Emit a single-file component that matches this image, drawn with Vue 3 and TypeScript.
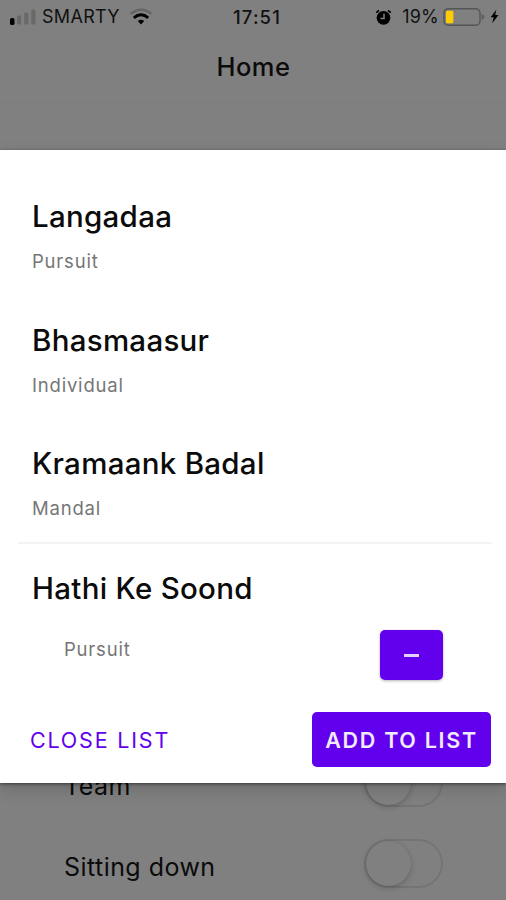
<script setup lang="ts">
interface Game {
  name: string
  kind: string
}

const games: Game[] = [
  { name: 'Langadaa', kind: 'Pursuit' },
  { name: 'Bhasmaasur', kind: 'Individual' },
  { name: 'Kramaank Badal', kind: 'Mandal' },
]

const filters: string[] = ['Team', 'Sitting down']
</script>

<template>
  <div class="screen">
    <header class="status">
      <div class="carrier">
        <svg class="signal" width="28" height="18" viewBox="0 0 28 18">
          <rect x="1" y="10" width="4.5" height="7" rx="1.6" fill="#000" />
          <g fill="#696969">
            <rect x="8" y="7.5" width="4.2" height="9" rx="1.2" />
            <rect x="15.2" y="4.5" width="4.2" height="12" rx="1.2" />
            <rect x="22.3" y="1.5" width="4.2" height="15" rx="1.2" />
          </g>
        </svg>
        <span class="carrier-name">SMARTY</span>
        <svg class="wifi" width="24" height="18" viewBox="0 0 24 18">
          <path d="M1.6 5.8Q12-2.4 22.4 5.8" fill="none" stroke="#656565" stroke-width="2.5" />
          <path d="M4.8 9.8Q12 3.8 19.2 9.8" fill="none" stroke="#000" stroke-width="2.9" />
          <path d="M12 16.4L8.8 13.1Q12 10.4 15.2 13.1Z" fill="#000" />
        </svg>
      </div>
      <span class="clock">17:51</span>
      <div class="power">
        <svg class="alarm" width="17" height="17" viewBox="0 0 17 17">
          <circle cx="8.5" cy="8.8" r="6.9" fill="#000" />
          <path d="M1.2 3.6L4 1.5M15.8 3.6L13 1.5" stroke="#000" stroke-width="1.8" />
          <path d="M9 4.8V9.4H5.4" fill="none" stroke="#808080" stroke-width="1.5" />
        </svg>
        <span class="percent">19%</span>
        <svg class="battery" width="42" height="20" viewBox="0 0 42 20">
          <rect x="1" y="1.7" width="36" height="16.6" rx="4.2" fill="none" stroke="#555" stroke-width="1.4" />
          <rect x="3" y="3.8" width="7.4" height="12.4" rx="1.4" fill="#ffcc00" />
          <path d="M38.5 6.8Q41.5 8 41.5 10T38.5 13.2Z" fill="#606060" />
        </svg>
        <svg class="bolt" width="9" height="15" viewBox="0 0 9 15">
          <path d="M6.3 .8L.6 8.2H3.7L2.2 14.2L8.5 6.1H5.2Z" fill="#000" />
        </svg>
      </div>
    </header>
    <h1 class="title">Home</h1>
    <section class="filters">
      <div v-for="label in filters" :key="label" class="filter">
        <span class="filter-label">{{ label }}</span>
        <span class="switch"><span class="knob"></span></span>
      </div>
    </section>

    <main class="dialog">
      <article v-for="game in games" :key="game.name" class="game">
        <h2 class="name">{{ game.name }}</h2>
        <p class="kind">{{ game.kind }}</p>
      </article>
      <article class="game selected">
        <h2 class="name">Hathi Ke Soond</h2>
        <div class="choice">
          <p class="kind">Pursuit</p>
          <button class="remove" aria-label="Remove"><span class="minus"></span></button>
        </div>
      </article>
      <footer class="actions">
        <button class="close">CLOSE LIST</button>
        <button class="add">ADD TO LIST</button>
      </footer>
    </main>
  </div>
</template>

<style>
body {
  background: #808080;
}
</style>

<style scoped>
.screen {
  position: relative;
  display: flex;
  flex-direction: column;
  width: 506px;
  height: 900px;
  overflow: hidden;
  background: #808080;
  color: #0b0b0b;
  font-family: Inter, "Liberation Sans", sans-serif;
}
h1, h2, p {
  margin: 0;
  font-weight: 400;
}
button {
  border: 0;
  padding: 0;
  font-family: inherit;
}
svg {
  display: block;
  flex: none;
}
.status {
  display: grid;
  grid-template-columns: 1fr auto 1fr;
  align-items: center;
  height: 34px;
  padding: 0 7px 0 9px;
  box-sizing: border-box;
  font-size: 18px;
  line-height: 34px;
  color: #111;
}
.carrier, .power {
  display: flex;
  align-items: center;
}
.power {
  justify-content: flex-end;
}
.carrier-name {
  width: 78px;
  margin-left: 5px;
  letter-spacing: 0.3px;
}
.wifi {
  margin-left: 9px;
}
.clock {
  margin-left: 6px;
  font-size: 18.5px;
  font-weight: 500;
  line-height: 33px;
  letter-spacing: 1.1px;
}
.percent {
  margin: 0 4px 0 10px;
  letter-spacing: 0.2px;
}
.bolt {
  margin: 0 0 2px 5px;
}
.title {
  height: 68px;
  padding-left: 1px;
  border-bottom: 1px solid #7d7d7d;
  line-height: 66px;
  text-align: center;
  font-size: 25.5px;
  font-weight: 550;
  letter-spacing: 0.5px;
}
.filters {
  margin-top: auto;
  padding: 0 63px 0 64px;
}
.filter {
  display: flex;
  align-items: center;
  justify-content: space-between;
  height: 78px;
}
.filters .filter:last-child {
  height: 74px;
  margin-top: 5px;
}
.filter-label {
  padding-top: 7px;
  font-size: 25px;
  letter-spacing: 0.45px;
}
.switch {
  box-sizing: border-box;
  width: 79px;
  height: 49px;
  border: 2px solid #747474;
  border-radius: 25px;
}
.knob {
  display: block;
  width: 45px;
  height: 45px;
  border-radius: 50%;
  background: #808080;
  box-shadow: 0 2px 6px rgba(0, 0, 0, 0.2), 0 0 1px rgba(0, 0, 0, 0.15);
}
.dialog {
  position: absolute;
  top: 150px;
  left: 0;
  box-sizing: border-box;
  width: 506px;
  height: 633px;
  padding-top: 22px;
  background: #fff;
  box-shadow: 0 1px 3px rgba(0, 0, 0, 0.5), 0 6px 16px rgba(0, 0, 0, 0.16);
}
.game {
  box-sizing: border-box;
  height: 123.7px;
  padding: 24px 15px 0 32px;
}
.name {
  font-size: 29.5px;
  font-weight: 450;
  line-height: 40px;
  letter-spacing: 0.28px;
}
.kind {
  margin-top: 13px;
  font-size: 18.5px;
  line-height: 24px;
  letter-spacing: 0.8px;
  color: #767676;
}
.selected {
  height: 154px;
  margin: -1px 14px 0 18px;
  border-top: 2px solid #f3f3f3;
  padding: 24px 49px 0 14px;
}
.choice {
  display: flex;
  align-items: flex-start;
  justify-content: space-between;
  padding: 22px 0 0 32px;
}
.choice .kind {
  margin-top: 7px;
}
.remove {
  display: flex;
  align-items: center;
  justify-content: center;
  width: 63px;
  height: 50px;
  border-radius: 5px;
  background: #6200ee;
  box-shadow: 0 1px 3px rgba(0, 0, 0, 0.3);
}
.minus {
  width: 15px;
  height: 3px;
  background: #e3d2fc;
}
.actions {
  display: flex;
  align-items: center;
  justify-content: space-between;
  padding: 16px 15px 0 30px;
}
.close, .add {
  height: 55px;
  font-size: 21.5px;
  white-space: nowrap;
}
.close {
  background: none;
  color: #6200ee;
  letter-spacing: 1.8px;
}
.add {
  width: 179px;
  border-radius: 5px;
  background: #6200ee;
  color: #f2eafe;
  font-weight: 600;
  letter-spacing: 1.7px;
}
</style>
